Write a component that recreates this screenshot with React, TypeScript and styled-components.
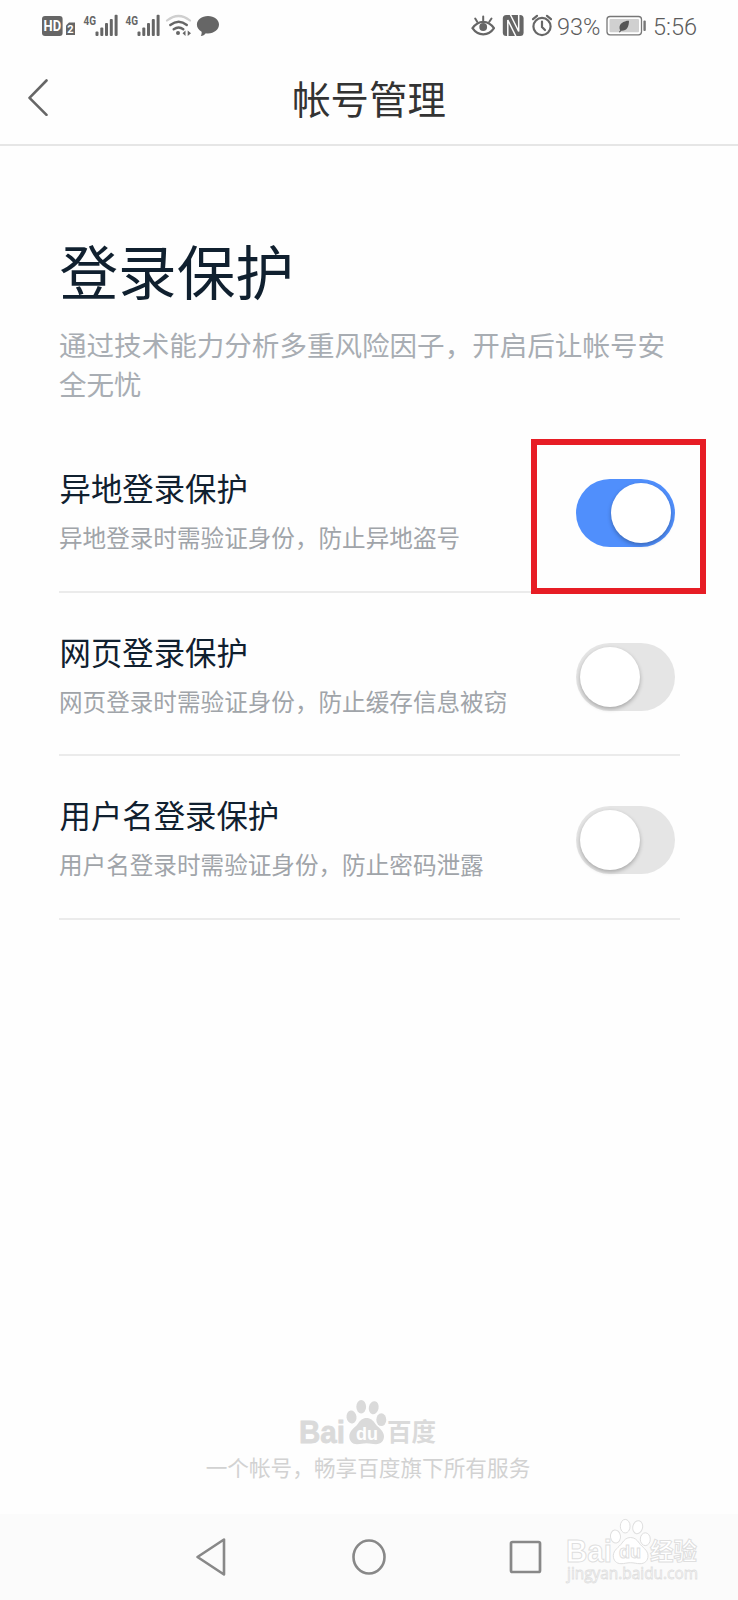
import React, { useState } from "react";
import styled, { createGlobalStyle } from "styled-components";

const GlobalStyle = createGlobalStyle`
  * { box-sizing: border-box; }
  body {
    margin: 0;
    background: #fefefe;
    font-family: "Noto Sans CJK SC", sans-serif;
  }
`;

const Screen = styled.div`
  width: 738px;
  height: 1600px;
  display: flex;
  flex-direction: column;
  overflow: hidden;
  background: #fefefe;
`;

const StatusBar = styled.div`
  height: 50px;
  flex: none;
  display: flex;
  align-items: center;
  justify-content: space-between;
  padding: 2px 43px 0 41px;
  color: #666;
`;

const StatusGroup = styled.div`
  display: flex;
  align-items: center;
`;

const StatusIcon = styled.svg<{ $gap?: number }>`
  display: block;
  height: 24px;
  margin-right: ${(p) => p.$gap ?? 0}px;
`;

const StatusText = styled.span<{ $width: number; $gap?: number }>`
  width: ${(p) => p.$width}px;
  margin-right: ${(p) => p.$gap ?? 0}px;
  padding-top: 1px;
  font: 300 23.5px/24px Roboto, sans-serif;
  color: #5c5c5c;
  white-space: nowrap;
`;

const Header = styled.header`
  height: 96px;
  flex: none;
  display: grid;
  grid-template-columns: 60px 1fr 60px;
  align-items: center;
  border-bottom: 2px solid #e6e6e6;
`;

const BackButton = styled.button`
  justify-self: end;
  padding: 0;
  margin: 0 10px 0 0;
  border: 0;
  background: none;
  line-height: 0;
`;

const HeaderTitle = styled.h1`
  margin: 0;
  text-align: center;
  font-size: 38.4px;
  line-height: 50px;
  font-weight: 400;
  color: #333;
`;

const Content = styled.main`
  flex: 1;
  display: flex;
  flex-direction: column;
  padding: 81px 58.5px 0;
`;

const PageTitle = styled.h2`
  margin: 0 0 0 1px;
  font-size: 58.6px;
  line-height: 86px;
  font-weight: 400;
  color: #10202f;
`;

const Description = styled.p`
  margin: 12px 0 26px 0.5px;
  font-size: 27.55px;
  line-height: 39px;
  color: #a8adb3;
`;

const Row = styled.section`
  height: 163.6px;
  display: flex;
  align-items: flex-start;
  justify-content: space-between;
  border-bottom: 2px solid #ebebeb;
  padding: 36px 4.5px 0 0;
`;

const RowTitle = styled.h3`
  margin: 0 0 0 1px;
  font-size: 31.4px;
  line-height: 46px;
  font-weight: 400;
  color: #10202f;
`;

const RowNote = styled.p`
  margin: 9px 0 0 0.5px;
  font-size: 23.6px;
  line-height: 34px;
  color: #a0a4a9;
`;

const SwitchSlot = styled.div`
  position: relative;
  margin-top: 14px;
`;

const Switch = styled.button<{ $on: boolean }>`
  display: flex;
  justify-content: ${(p) => (p.$on ? "flex-end" : "flex-start")};
  width: 99.5px;
  height: 68px;
  padding: 4px;
  border: 0;
  border-radius: 34px;
  background: ${(p) => (p.$on ? "#508ffc" : "#e5e5e5")};
`;

const Knob = styled.span`
  width: 60px;
  height: 60px;
  border-radius: 50%;
  background: #fff;
  box-shadow: 0 2px 4px rgba(0, 0, 0, 0.28);
`;

const Highlight = styled.div`
  position: absolute;
  left: -45px;
  top: -40px;
  width: 175px;
  height: 155px;
  border: 6.5px solid #e71d25;
  pointer-events: none;
`;

const Footer = styled.footer`
  flex: none;
  height: 117px;
  display: flex;
  flex-direction: column;
  align-items: center;
  padding-right: 2px;
`;

const Slogan = styled.p`
  margin: 0;
  font-size: 21.65px;
  line-height: 32px;
  color: #d2d2d2;
`;

const NavBar = styled.nav`
  position: relative;
  flex: none;
  height: 86px;
  display: flex;
  align-items: center;
  justify-content: space-between;
  padding: 0 194px;
  background: #fbfbfb;
`;

const Watermark = styled.svg`
  position: absolute;
  left: 560px;
  top: 2px;
  overflow: visible;
`;

const Signal = ({ gap }: { gap: number }) => (
  <StatusIcon width="36" viewBox="83 14 36 24" $gap={gap} fill="currentColor">
    <text x="83.5" y="24.5" fontFamily="Roboto" fontWeight="700" fontSize="13" textLength="12.5" lengthAdjust="spacingAndGlyphs">4G</text>
    <rect x="95.5" y="31.5" width="3" height="4.5" rx="1" />
    <rect x="100.3" y="27.5" width="3" height="8.5" rx="1" />
    <rect x="105" y="23" width="3" height="13" rx="1" />
    <rect x="109.8" y="19" width="3" height="17" rx="1" />
    <rect x="114.6" y="14.8" width="3" height="21.2" rx="1" />
  </StatusIcon>
);

const Paw = () => (
  <>
    <ellipse cx="351.5" cy="1417" rx="5" ry="6.5" transform="rotate(-8 351.5 1417)" />
    <ellipse cx="361.2" cy="1406.7" rx="4.9" ry="6.8" />
    <ellipse cx="373.7" cy="1407.7" rx="4.9" ry="6.6" transform="rotate(12 373.7 1407.7)" />
    <ellipse cx="381.3" cy="1419.7" rx="5" ry="6.4" />
    <path d="M366.500 1418c4 0 6.500 2.300 8.800 5.700 2.600 3.800 8.700 6.700 8.700 12.600 0 4.900-3.200 7.900-8 7.900-3.800 0-5.800-1-9.500-1s-5.700 1-9.500 1c-4.800 0-7.700-3.400-7.700-8 0-5.700 5.900-8.700 8.600-12.500 2.400-3.400 4.700-5.700 8.600-5.700Z" />
  </>
);

const protections = [
  { title: "异地登录保护", note: "异地登录时需验证身份，防止异地盗号", highlighted: true },
  { title: "网页登录保护", note: "网页登录时需验证身份，防止缓存信息被窃" },
  { title: "用户名登录保护", note: "用户名登录时需验证身份，防止密码泄露" },
];

export default function App() {
  const [enabled, setEnabled] = useState([true, false, false]);
  const toggle = (i: number) => setEnabled(enabled.map((v, n) => (n === i ? !v : v)));

  return (
    <>
      <GlobalStyle />
      <Screen>
        <StatusBar>
          <StatusGroup>
            <StatusIcon width="36" viewBox="41 14 36 24" $gap={6} fill="currentColor">
              <rect x="42" y="16" width="20.600" height="20" rx="3" />
              <text x="43.600" y="31.300" fill="#fff" fontFamily="Roboto" fontWeight="700" fontSize="14.500" textLength="17.500" lengthAdjust="spacingAndGlyphs">HD</text>
              <path d="M69 22.500h6v12.500h-9v-9.500Z" />
              <text x="67.300" y="33" fill="#fff" fontFamily="Roboto" fontWeight="700" fontSize="11">2</text>
            </StatusIcon>
            <Signal gap={6} />
            <Signal gap={4} />
            <StatusIcon width="28" viewBox="165 14 28 24" $gap={3} fill="none" stroke="currentColor" strokeLinecap="round">
              <path d="M167 20.500q11.500-9 23 0" stroke="#cfcfcf" strokeWidth="2.200" />
              <path d="M170.300 25q8.500-6.500 16.500 0M173.700 29.300q5-3.600 9.600 0" strokeWidth="2.400" />
              <circle cx="178" cy="33" r="2" fill="currentColor" stroke="none" />
              <path d="m182.500 33.200 3-2.700v5.400ZM191 33.200l-3.300-2.700v5.400Z" fill="currentColor" stroke="none" />
            </StatusIcon>
            <StatusIcon width="24" viewBox="196 14 24 24" fill="currentColor">
              <path d="M208 16c6.300 0 11 3.700 11 8.600 0 5-4.700 8.800-11 8.800-.8 0-1.500 0-2.200-.2-1 1.500-3 2.800-5 2.800.8-1.500 1-3 .8-4.300-3-1.600-4.700-4.100-4.700-7.100 0-4.900 4.800-8.600 11.100-8.600Z" />
            </StatusIcon>
          </StatusGroup>
          <StatusGroup>
            <StatusIcon width="24" viewBox="471 14 24 24" $gap={7} fill="none" stroke="currentColor" strokeWidth="2.200" strokeLinecap="round">
              <path d="M472.500 28.200c6-8.500 15.500-8.500 21.500 0-5.500 8.200-16 8.200-21.500 0Z" />
              <circle cx="483.200" cy="27" r="3.900" fill="currentColor" stroke="none" />
              <path d="M483.200 16.500v4M475.200 18.500l2 3.300M491.500 18.500l-2.200 3.300" strokeWidth="2" />
            </StatusIcon>
            <StatusIcon width="22" viewBox="502 14 22 24" $gap={6} fill="currentColor">
              <rect x="502.800" y="15" width="20.800" height="21" rx="3.500" />
              <path d="M507.800 36.500V20l8.200 16.500M518.700 14.500V31.500L510.300 14.500" stroke="#fefefe" strokeWidth="1.500" fill="none" />
            </StatusIcon>
            <StatusIcon width="24" viewBox="530 14 24 24" $gap={3} fill="none" stroke="currentColor" strokeWidth="2.200" strokeLinecap="round">
              <circle cx="542" cy="26.500" r="8.600" />
              <path d="M542 21.500v5.500l3 3M533 19.200l4-3.400M551 19.200l-4-3.400" />
            </StatusIcon>
            <StatusText $width={41} $gap={8}>93%</StatusText>
            <StatusIcon width="40" viewBox="605 14 40 24" $gap={7}>
              <rect x="606" y="16.500" width="34.500" height="18.300" rx="3" fill="#fff" stroke="#777" strokeWidth="1.300" />
              <rect x="608.500" y="19" width="29.500" height="13.300" rx="1" fill="#d0d0d0" />
              <rect x="642.400" y="20.500" width="2.400" height="10.500" rx="1" fill="#777" />
              <path d="M628 20.500c-6 .8-9.500 3.200-9.500 7.200 0 1.200.4 2 .8 2.600l-1.400 1.600.8.500 1.600-1.600c5.500.3 7.700-4 7.700-10.300Z" fill="#555" />
            </StatusIcon>
            <StatusText $width={42}>5:56</StatusText>
          </StatusGroup>
        </StatusBar>

        <Header>
          <BackButton aria-label="返回">
            <svg width="22" height="38" viewBox="0 0 22 38" fill="none" stroke="#666" strokeWidth="2.600" strokeLinecap="round" strokeLinejoin="round">
              <path d="M18.500 2.500 1.500 19.800l17 17" />
            </svg>
          </BackButton>
          <HeaderTitle>帐号管理</HeaderTitle>
        </Header>

        <Content>
          <PageTitle>登录保护</PageTitle>
          <Description>通过技术能力分析多重风险因子，开启后让帐号安全无忧</Description>
          {protections.map((item, i) => (
            <Row key={item.title}>
              <div>
                <RowTitle>{item.title}</RowTitle>
                <RowNote>{item.note}</RowNote>
              </div>
              <SwitchSlot>
                <Switch $on={enabled[i]} role="switch" aria-checked={enabled[i]} onClick={() => toggle(i)}>
                  <Knob />
                </Switch>
                {item.highlighted && <Highlight />}
              </SwitchSlot>
            </Row>
          ))}
        </Content>

        <Footer>
          <svg width="140" height="54" viewBox="298 1397 140 54" fill="#dadada">
            <text x="299" y="1442.500" fontFamily="Liberation Sans" fontWeight="700" fontSize="32" stroke="#dadada" strokeWidth="0.800" textLength="46" lengthAdjust="spacingAndGlyphs">Bai</text>
            <Paw />
            <text x="356" y="1440" fill="#fefefe" fontFamily="Liberation Sans" fontWeight="700" fontSize="19" textLength="22" lengthAdjust="spacingAndGlyphs">du</text>
            <text x="387" y="1441" fontFamily="Noto Sans CJK SC" fontWeight="700" fontSize="24.500" textLength="49" lengthAdjust="spacingAndGlyphs">百度</text>
          </svg>
          <Slogan>一个帐号，畅享百度旗下所有服务</Slogan>
        </Footer>

        <NavBar>
          <svg width="34" height="42" viewBox="0 0 34 42" fill="none" stroke="#888" strokeWidth="2.600" strokeLinejoin="round">
            <path d="M30 3.500v35L3.500 21Z" />
          </svg>
          <svg width="36" height="42" viewBox="0 0 36 42" fill="none" stroke="#888" strokeWidth="2.600">
            <ellipse cx="19" cy="21" rx="15.500" ry="16.500" />
          </svg>
          <svg width="36" height="42" viewBox="0 0 36 42" fill="none" stroke="#888" strokeWidth="2.700">
            <rect x="3" y="6" width="29" height="30" rx="1.500" />
          </svg>
          <Watermark width="144" height="80" viewBox="560 1516 144 80" fill="#fff" stroke="#dfdfdf" strokeWidth="1">
            <text x="566" y="1562" fontFamily="Liberation Sans" fontWeight="700" fontSize="31" textLength="46" lengthAdjust="spacingAndGlyphs">Bai</text>
            <g transform="translate(264 119.500)"><Paw /></g>
            <text x="619" y="1558" fontFamily="Liberation Sans" fontWeight="700" fontSize="18" textLength="22" lengthAdjust="spacingAndGlyphs">du</text>
            <text x="650" y="1560" fontFamily="Noto Sans CJK SC" fontWeight="700" fontSize="23.500" textLength="47" lengthAdjust="spacingAndGlyphs">经验</text>
            <text x="567" y="1578.500" fontFamily="Open Sans" fontWeight="400" fontSize="16" textLength="131" lengthAdjust="spacingAndGlyphs" strokeWidth="0.800">jingyan.baidu.com</text>
          </Watermark>
        </NavBar>
      </Screen>
    </>
  );
}
